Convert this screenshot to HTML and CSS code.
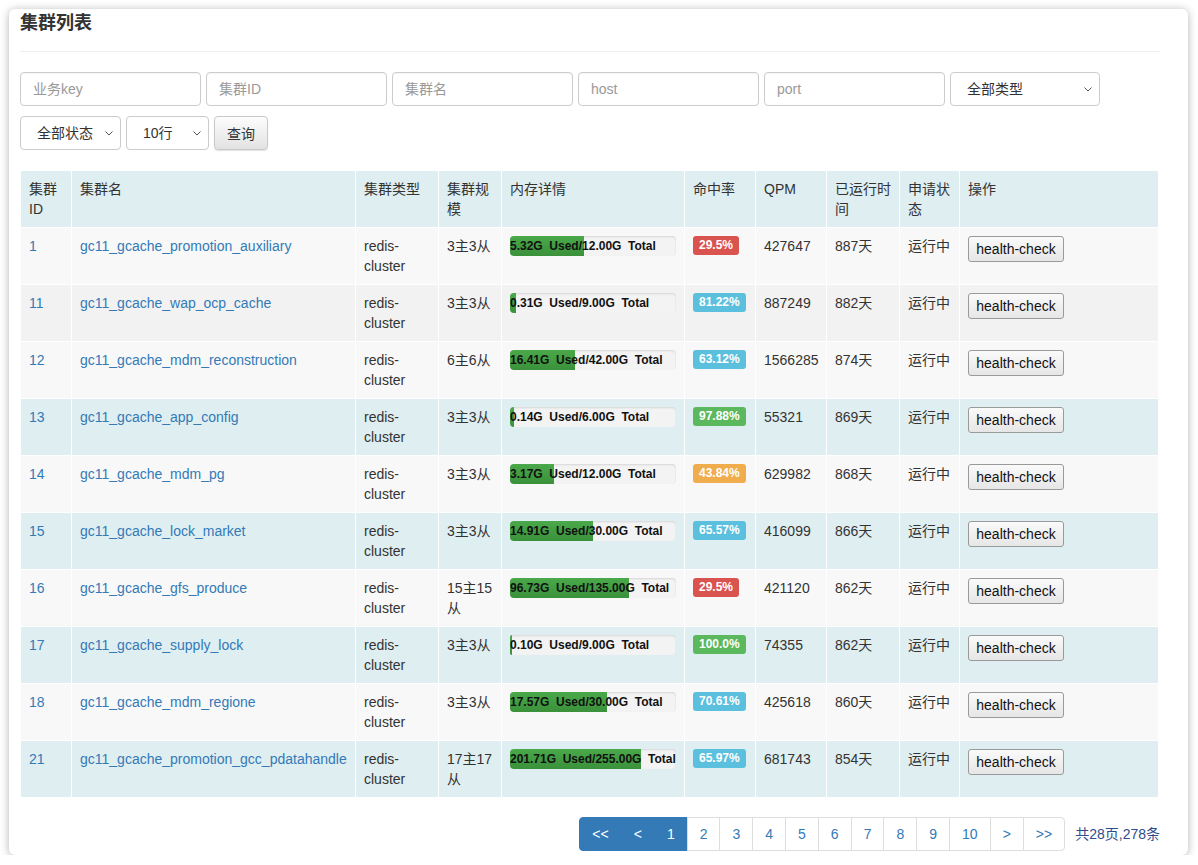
FILE: index.html
```html
<!DOCTYPE html>
<html lang="zh-CN">
<head>
<meta charset="utf-8">
<title>集群列表</title>
<link rel="stylesheet" href="styles.css">
</head>
<body>
<div class="card">
  <h3 class="title">集群列表</h3>
  <hr class="divider">
  <div class="filters">
    <input class="field w-input" placeholder="业务key">
    <input class="field w-input" placeholder="集群ID">
    <input class="field w-input" placeholder="集群名">
    <input class="field w-input" placeholder="host">
    <input class="field w-input" placeholder="port">
    <div class="select-wrap w-type">
      <select class="sel"><option>全部类型</option></select>
      <svg class="chev" width="8" height="5" viewBox="0 0 8 5"><polyline points="0.5,0.5 4,4 7.5,0.5" fill="none" stroke="#555" stroke-width="1"/></svg>
    </div>
  </div>
  <div class="filters row2">
    <div class="select-wrap w-status">
      <select class="sel"><option>全部状态</option></select>
      <svg class="chev" width="8" height="5" viewBox="0 0 8 5"><polyline points="0.5,0.5 4,4 7.5,0.5" fill="none" stroke="#555" stroke-width="1"/></svg>
    </div>
    <div class="select-wrap w-rows">
      <select class="sel"><option>10行</option></select>
      <svg class="chev" width="8" height="5" viewBox="0 0 8 5"><polyline points="0.5,0.5 4,4 7.5,0.5" fill="none" stroke="#555" stroke-width="1"/></svg>
    </div>
    <button class="btn">查询</button>
  </div>

  <table class="grid">
    <colgroup>
      <col class="c-id"><col class="c-name"><col class="c-type"><col class="c-scale"><col class="c-mem"><col class="c-hit"><col class="c-qpm"><col class="c-run"><col class="c-status"><col class="c-op">
    </colgroup>
    <thead>
      <tr><th>集群ID</th><th>集群名</th><th>集群类型</th><th>集群规模</th><th>内存详情</th><th>命中率</th><th>QPM</th><th>已运行时间</th><th>申请状态</th><th>操作</th></tr>
    </thead>
    <tbody>
      <tr class="r-light">
        <td><a href="#">1</a></td><td><a href="#">gc11_gcache_promotion_auxiliary</a></td><td>redis-cluster</td><td>3主3从</td>
        <td><div class="progress"><div class="bar" style="width:44.33%">5.32G&nbsp;&nbsp;Used/12.00G&nbsp;&nbsp;Total</div></div></td>
        <td><span class="badge b-red">29.5%</span></td><td>427647</td><td>887天</td><td>运行中</td><td><button class="hc">health-check</button></td>
      </tr>
      <tr class="r-gray">
        <td><a href="#">11</a></td><td><a href="#">gc11_gcache_wap_ocp_cache</a></td><td>redis-cluster</td><td>3主3从</td>
        <td><div class="progress"><div class="bar" style="width:3.44%">0.31G&nbsp;&nbsp;Used/9.00G&nbsp;&nbsp;Total</div></div></td>
        <td><span class="badge b-blue">81.22%</span></td><td>887249</td><td>882天</td><td>运行中</td><td><button class="hc">health-check</button></td>
      </tr>
      <tr class="r-light">
        <td><a href="#">12</a></td><td><a href="#">gc11_gcache_mdm_reconstruction</a></td><td>redis-cluster</td><td>6主6从</td>
        <td><div class="progress"><div class="bar" style="width:39.07%">16.41G&nbsp;&nbsp;Used/42.00G&nbsp;&nbsp;Total</div></div></td>
        <td><span class="badge b-blue">63.12%</span></td><td>1566285</td><td>874天</td><td>运行中</td><td><button class="hc">health-check</button></td>
      </tr>
      <tr class="r-blue">
        <td><a href="#">13</a></td><td><a href="#">gc11_gcache_app_config</a></td><td>redis-cluster</td><td>3主3从</td>
        <td><div class="progress"><div class="bar" style="width:2.33%">0.14G&nbsp;&nbsp;Used/6.00G&nbsp;&nbsp;Total</div></div></td>
        <td><span class="badge b-green">97.88%</span></td><td>55321</td><td>869天</td><td>运行中</td><td><button class="hc">health-check</button></td>
      </tr>
      <tr class="r-light">
        <td><a href="#">14</a></td><td><a href="#">gc11_gcache_mdm_pg</a></td><td>redis-cluster</td><td>3主3从</td>
        <td><div class="progress"><div class="bar" style="width:26.42%">3.17G&nbsp;&nbsp;Used/12.00G&nbsp;&nbsp;Total</div></div></td>
        <td><span class="badge b-orange">43.84%</span></td><td>629982</td><td>868天</td><td>运行中</td><td><button class="hc">health-check</button></td>
      </tr>
      <tr class="r-blue">
        <td><a href="#">15</a></td><td><a href="#">gc11_gcache_lock_market</a></td><td>redis-cluster</td><td>3主3从</td>
        <td><div class="progress"><div class="bar" style="width:49.7%">14.91G&nbsp;&nbsp;Used/30.00G&nbsp;&nbsp;Total</div></div></td>
        <td><span class="badge b-blue">65.57%</span></td><td>416099</td><td>866天</td><td>运行中</td><td><button class="hc">health-check</button></td>
      </tr>
      <tr class="r-light">
        <td><a href="#">16</a></td><td><a href="#">gc11_gcache_gfs_produce</a></td><td>redis-cluster</td><td>15主15从</td>
        <td><div class="progress"><div class="bar" style="width:71.65%">96.73G&nbsp;&nbsp;Used/135.00G&nbsp;&nbsp;Total</div></div></td>
        <td><span class="badge b-red">29.5%</span></td><td>421120</td><td>862天</td><td>运行中</td><td><button class="hc">health-check</button></td>
      </tr>
      <tr class="r-blue">
        <td><a href="#">17</a></td><td><a href="#">gc11_gcache_supply_lock</a></td><td>redis-cluster</td><td>3主3从</td>
        <td><div class="progress"><div class="bar" style="width:1.11%">0.10G&nbsp;&nbsp;Used/9.00G&nbsp;&nbsp;Total</div></div></td>
        <td><span class="badge b-green">100.0%</span></td><td>74355</td><td>862天</td><td>运行中</td><td><button class="hc">health-check</button></td>
      </tr>
      <tr class="r-light">
        <td><a href="#">18</a></td><td><a href="#">gc11_gcache_mdm_regione</a></td><td>redis-cluster</td><td>3主3从</td>
        <td><div class="progress"><div class="bar" style="width:58.57%">17.57G&nbsp;&nbsp;Used/30.00G&nbsp;&nbsp;Total</div></div></td>
        <td><span class="badge b-blue">70.61%</span></td><td>425618</td><td>860天</td><td>运行中</td><td><button class="hc">health-check</button></td>
      </tr>
      <tr class="r-blue">
        <td><a href="#">21</a></td><td><a href="#">gc11_gcache_promotion_gcc_pdatahandle</a></td><td>redis-cluster</td><td>17主17从</td>
        <td><div class="progress"><div class="bar" style="width:79.1%">201.71G&nbsp;&nbsp;Used/255.00G&nbsp;&nbsp;Total</div></div></td>
        <td><span class="badge b-blue">65.97%</span></td><td>681743</td><td>854天</td><td>运行中</td><td><button class="hc">health-check</button></td>
      </tr>
    </tbody>
  </table>

  <div class="pager-row">
    <ul class="pager">
      <li class="active first"><a href="#">&lt;&lt;</a></li>
      <li class="active"><a href="#">&lt;</a></li>
      <li class="active"><a href="#">1</a></li>
      <li><a href="#">2</a></li>
      <li><a href="#">3</a></li>
      <li><a href="#">4</a></li>
      <li><a href="#">5</a></li>
      <li><a href="#">6</a></li>
      <li><a href="#">7</a></li>
      <li><a href="#">8</a></li>
      <li><a href="#">9</a></li>
      <li><a href="#">10</a></li>
      <li><a href="#">&gt;</a></li>
      <li class="last"><a href="#">&gt;&gt;</a></li>
    </ul>
    <span class="total">共28页,278条</span>
  </div>
</div>
</body>
</html>
```

FILE: styles.css
```css
html, body {
  margin: 0;
  padding: 0;
  background: #fff;
}
body {
  font-family: "Liberation Sans", "Noto Sans CJK SC", sans-serif;
  font-size: 14px;
  line-height: 20px;
  color: #333;
}
.card {
  margin: 9px 0 0 9px;
  width: 1179px;
  height: 846px;
  box-sizing: border-box;
  padding: 2px 28px 0 11px;
  background: #fff;
  border-radius: 6px;
  box-shadow: 0 1px 8px rgba(0, 0, 0, 0.3);
}
.title {
  margin: 0;
  font-size: 18px;
  line-height: 24px;
  font-weight: bold;
  color: #333;
}
.divider {
  border: 0;
  border-top: 1px solid #eee;
  margin: 16px 0 20px 0;
  height: 0;
}
.filters {
  display: flex;
  gap: 5px;
  height: 34px;
  margin-bottom: 10px;
}
.filters.row2 {
  margin-bottom: 20px;
}
.field {
  box-sizing: border-box;
  height: 34px;
  border: 1px solid #ccc;
  border-radius: 4px;
  padding: 0 12px;
  font-family: inherit;
  font-size: 14px;
  color: #555;
  background: #fff;
  box-shadow: inset 0 1px 1px rgba(0, 0, 0, 0.04);
  outline: none;
}
.field::placeholder {
  color: #999;
}
.w-input { width: 181px; }
.select-wrap {
  position: relative;
  height: 34px;
}
.w-type { width: 150px; }
.w-status { width: 101px; }
.w-rows { width: 83px; }
.sel {
  -webkit-appearance: none;
  appearance: none;
  box-sizing: border-box;
  width: 100%;
  height: 34px;
  border: 1px solid #ccc;
  border-radius: 4px;
  padding: 0 20px 0 16px;
  font-family: inherit;
  font-size: 14px;
  color: #333;
  background: #fff;
}
.chev {
  position: absolute;
  right: 8px;
  top: 15px;
  pointer-events: none;
}
.btn {
  box-sizing: border-box;
  width: 54px;
  height: 34px;
  border: 1px solid #c8c8c8;
  border-radius: 4px;
  background: linear-gradient(to bottom, #fdfdfd, #e2e2e2);
  box-shadow: 0 1px 1px rgba(0, 0, 0, 0.12);
  font-family: inherit;
  font-size: 14px;
  color: #333;
  padding: 0;
}
.grid {
  width: 1138px;
  table-layout: fixed;
  border-collapse: collapse;
}
.c-id { width: 51px; }
.c-name { width: 284px; }
.c-type { width: 83px; }
.c-scale { width: 63px; }
.c-mem { width: 183px; }
.c-hit { width: 71px; }
.c-qpm { width: 71px; }
.c-run { width: 73px; }
.c-status { width: 60px; }
.c-op { width: 199px; }
.grid th,
.grid td {
  border: 1px solid #fff;
  padding: 8px;
  line-height: 20px;
  height: 40px;
  vertical-align: top;
  text-align: left;
  font-weight: normal;
  color: #333;
}
.grid th {
  background: #dfeef1;
}
.grid .r-light td { background: #f8f8f8; }
.grid .r-gray td { background: #f2f2f2; }
.grid .r-blue td { background: #dfeef1; }
.grid a {
  color: #337ab7;
  text-decoration: none;
  white-space: nowrap;
}
.progress {
  height: 20px;
  background: #f3f3f3;
  border-radius: 4px;
  box-shadow: inset 0 1px 2px rgba(0, 0, 0, 0.12);
}
.bar {
  height: 20px;
  background: linear-gradient(to bottom, #4aa94a, #3a913a);
  border-radius: 4px 0 0 4px;
  white-space: nowrap;
  overflow: visible;
  font-size: 12px;
  font-weight: bold;
  line-height: 20px;
  color: #111;
}
.badge {
  display: inline-block;
  vertical-align: top;
  margin-top: 0;
  padding: 3px 6px 3px;
  font-size: 12px;
  line-height: 13px;
  font-weight: bold;
  color: #fff;
  border-radius: 3px;
}
.b-red { background: #d9534f; }
.b-blue { background: #5bc0de; }
.b-green { background: #5cb85c; }
.b-orange { background: #f0ad4e; }
.hc {
  box-sizing: border-box;
  width: 96px;
  height: 26px;
  margin-top: 0;
  padding: 0;
  border: 1px solid #9a9a9a;
  border-radius: 3px;
  background: linear-gradient(to bottom, #fafafa, #e6e6e6);
  font-family: "Liberation Sans", sans-serif;
  font-size: 14px;
  color: #111;
}
.pager-row {
  display: flex;
  justify-content: flex-end;
  align-items: center;
  gap: 10px;
  margin-top: 19px;
  padding-right: 0;
}
.pager {
  display: flex;
  list-style: none;
  margin: 0;
  padding: 0;
}
.pager li {
  margin-left: -1px;
}
.pager li:first-child {
  margin-left: 0;
}
.pager a {
  display: block;
  padding: 6px 12px;
  line-height: 20px;
  border: 1px solid #ddd;
  color: #337ab7;
  text-decoration: none;
  background: #fff;
}
.pager .active a {
  background: #337ab7;
  border-color: #337ab7;
  color: #fff;
}
.pager .first a {
  border-radius: 4px 0 0 4px;
}
.pager .last a {
  border-radius: 0 4px 4px 0;
}
.total {
  color: #2f4c8a;
  font-size: 14px;
}
```
